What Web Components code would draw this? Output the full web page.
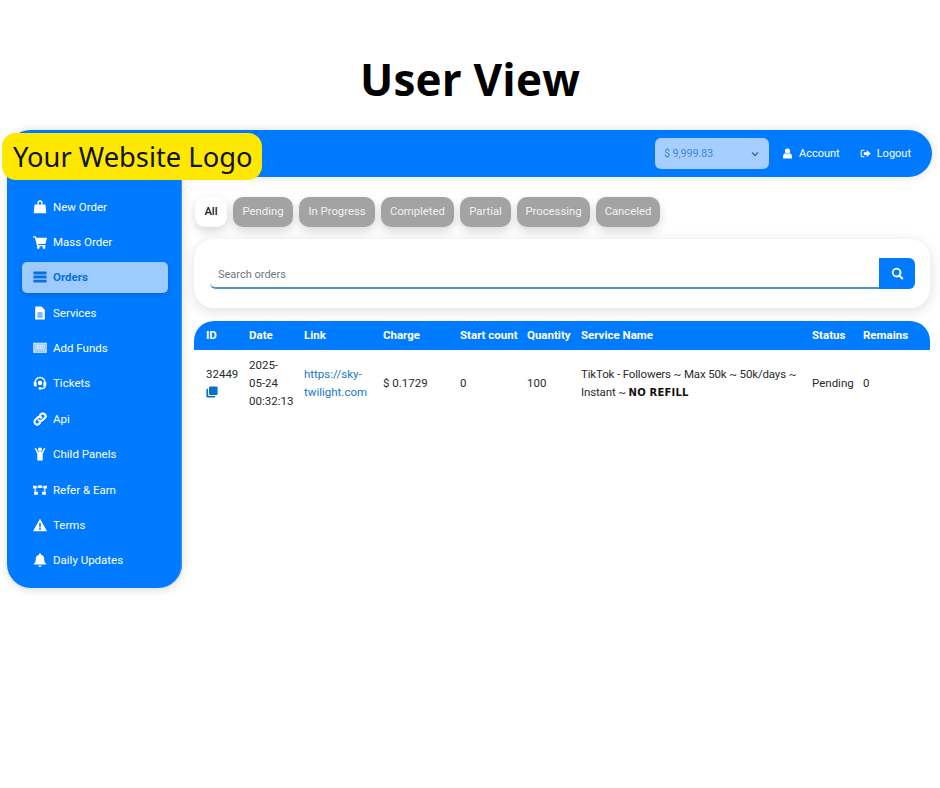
<!DOCTYPE html>
<html>
<head>
<meta charset="utf-8">
<title>User View</title>
<style>
  html, body { margin: 0; background: #fff; }
  body { font-family: Roboto, sans-serif; }
</style>
</head>
<body>
<user-view>
  <top-bar slot="top" balance="$ 9,999.83"></top-bar>
  <side-nav slot="side"></side-nav>
  <orders-page slot="main"></orders-page>
</user-view>

<script>
// Icons, drawn on a 16 x 16 box, filled with currentColor
const ICONS = {
  bag: '<path d="M5 5.500V3.400a3 3 0 0 1 6 0v2.100H9.500V3.400a1.500 1.500 0 0 0-3 0v2.100z"/><path d="M1.800 5h12.400l1 10H.8z"/>',
  cart: '<path d="M0 1.500h3.300l.5 1.700H16l-1.900 7H5.700l.3 1.200h8.200v1.400H4.700L2.200 2.900H0z"/><circle cx="6" cy="14.300" r="1.600"/><circle cx="12.500" cy="14.300" r="1.600"/>',
  list: '<path d="M.5 1.800h15v3.300H.5zM.5 6.400h15v3.300H.5zM.5 11h15v3.300H.5z"/>',
  file: '<path fill-rule="evenodd" d="M2.500 .5h7.200l3.800 3.800v11.200h-11zM5 7.500v1h6v-1zM5 9.800v1h6v-1zM5 12v1h6v-1z"/>',
  funds: '<path d="M.3 2h15.400v11.500H.3z" opacity=".88"/><path fill="none" stroke="#5aa5f7" stroke-width=".8" d="M2 3.600h12v6.400H2zM4.200 5.400v3M7 5.400v3M9.800 5.400v3M12 5.400v3M2 11.700h12"/>',
  headset: '<path fill="none" stroke="currentColor" stroke-width="1.700" d="M2.300 9V7.400a5.700 5.700 0 0 1 11.400 0V9"/><path d="M.8 7h3.400v5H2.600A1.800 1.800 0 0 1 .8 10.200zM11.800 7h3.400v3.200a1.800 1.800 0 0 1-1.800 1.800h-1.600z"/><path fill="none" stroke="currentColor" stroke-width="1.500" d="M13.800 11.500c0 1.900-1.200 2.800-3 2.800H8"/><path d="M6.500 12.900h3v2.600h-3z"/><circle cx="8" cy="8" r="2.500"/>',
  link: '<path fill="none" stroke="currentColor" stroke-width="2.400" stroke-linecap="round" d="M6.500 9.500a3.100 3.100 0 0 0 4.400 0l2.500-2.500A3.100 3.100 0 0 0 9 2.600L8 3.600M9.500 6.500a3.100 3.100 0 0 0-4.400 0L2.600 9A3.100 3.100 0 0 0 7 13.400l1-1"/>',
  child: '<circle cx="8" cy="3" r="2.300"/><path d="M3.200 .8 5.900 5.700h4.200L12.800.8l1.300.8-3 6V15.500H4.900V7.600l-3-6z"/>',
  network: '<path d="M0 3h4v3.300H0zM6 2.500h4v3.300H6zM12 3h4v3.300h-4zM1.300 10h4.400v3.500H1.300zM10.300 10h4.400v3.500h-4.400z"/><path d="M4 3.900h2v1.200H4zM10 3.900h2v1.200h-2zM2 6h1.300v4H2zM12.700 6H14v4h-1.300z"/>',
  warning: '<path fill-rule="evenodd" d="M8 .8 16 15H0zM7 5.800l.2 5h1.600l.2-5zM8 11.500a1.100 1.100 0 1 0 0 2.200 1.100 1.100 0 0 0 0-2.200z"/>',
  bell: '<path d="M8 .3a1.100 1.100 0 0 1 1.100 1.100v.6c2.400.5 3.800 2.500 3.800 5 0 3.100.9 4 2.100 5.200v.8H1v-.8c1.200-1.200 2.100-2.100 2.100-5.200 0-2.500 1.400-4.500 3.800-5v-.6A1.100 1.100 0 0 1 8 .3zM6 14.300h4A2 2 0 0 1 8 16a2 2 0 0 1-2-1.700z"/>',
  user: '<circle cx="8" cy="4.400" r="3.800"/><path d="M1.500 15.300V12c0-2.400 1.500-4.200 3.400-4.400a4.700 4.700 0 0 0 6.200 0c1.900.2 3.400 2 3.400 4.400v3.300z"/>',
  logout: '<path d="M6.500 2.500H3.400A2.400 2.400 0 0 0 1 4.900v6.200a2.400 2.400 0 0 0 2.400 2.400h3.100v-1.500H3.400a.9.900 0 0 1-.9-.9V4.900c0-.5.4-.9.900-.9h3.100z"/><path d="M9.800 3 15.500 8l-5.700 5v-3H5.500V6h4.300z"/>',
  search: '<path fill-rule="evenodd" d="M6.800 .8a6 6 0 0 1 4.900 9.500l3.700 3.700-1.700 1.700-3.700-3.700A6 6 0 1 1 6.800.8zm0 2.400a3.600 3.600 0 1 0 0 7.200 3.600 3.600 0 0 0 0-7.200z"/>',
  copy: '<path d="M5.500 .8h8.500A1.500 1.500 0 0 1 15.500 2.300v8.200a1.500 1.500 0 0 1-1.500 1.500H5.500A1.500 1.500 0 0 1 4 10.500V2.300A1.500 1.500 0 0 1 5.500 .8z"/><path d="M2.800 3.800v7.700a1.800 1.800 0 0 0 1.800 1.800h7.900v.6a1.500 1.500 0 0 1-1.500 1.500H2A1.500 1.500 0 0 1 .5 13.900V5.300A1.500 1.500 0 0 1 2 3.800z"/>'
};

const icon = (name, size = 14) =>
  `<svg width="${size}" height="${size}" viewBox="0 0 16 16" fill="currentColor" aria-hidden="true">${ICONS[name]}</svg>`;

const UI_FONT = 'Roboto, "Noto Sans", sans-serif';

class UserView extends HTMLElement {
  constructor() {
    super();
    this.attachShadow({ mode: 'open' });
    this.shadowRoot.innerHTML = `
      <style>
        :host { display: block; height: 788px; overflow: hidden; background: #fff; color: #000; font-family: ${UI_FONT}; }
        h1 {
          margin: 0;
          height: 130px;
          box-sizing: border-box;
          padding-top: 50px;
          text-align: center;
          font: 700 44px/58px "Open Sans", sans-serif;
          letter-spacing: .2px;
        }
        .app {
          position: relative;
          margin: 0 8px 0 7px;
          display: grid;
          grid-template-columns: 175px 1fr;
          grid-template-rows: 47px auto;
        }
        .top { grid-column: 1 / 3; }
        .main { padding: 20px 2px 0 12px; }
        .logo {
          position: absolute;
          left: -5px;
          top: 3px;
          width: 260px;
          height: 47px;
          padding-left: 11px;
          box-sizing: border-box;
          background: #ffe800;
          border-radius: 14px;
          font: 400 27.300px/47px "Noto Sans", sans-serif;
          white-space: nowrap;
          color: #111;
          z-index: 2;
        }
      </style>
      <h1>User View</h1>
      <div class="app">
        <div class="top"><slot name="top"></slot></div>
        <div class="side"><slot name="side"></slot></div>
        <div class="main"><slot name="main"></slot></div>
        <div class="logo">Your Website Logo</div>
      </div>
    `;
  }
}

class TopBar extends HTMLElement {
  constructor() {
    super();
    this.attachShadow({ mode: 'open' });
  }

  connectedCallback() {
    this.shadowRoot.innerHTML = `
      <style>
        :host {
          display: flex;
          align-items: center;
          justify-content: flex-end;
          height: 47px;
          padding-right: 21px;
          background: #007bff;
          border-radius: 24px;
          box-shadow: 0 0 10px rgba(0,0,0,.14);
          color: #fff;
          font-size: 11px;
          font-family: ${UI_FONT};
        }
        .balance {
          display: flex;
          align-items: center;
          justify-content: space-between;
          width: 114px;
          height: 31px;
          margin-right: 13px;
          padding: 0 9px 0 9px;
          box-sizing: border-box;
          border-radius: 6px;
          background: #a6cfff;
          color: #3d88d8;
          letter-spacing: -.2px;
        }
        .link { display: flex; align-items: center; gap: 6px; }
        .link + .link { margin-left: 20px; }
        span { padding-bottom: 1px; }
        svg { display: block; }
      </style>
      <div class="balance">
        <span>${this.getAttribute('balance')}</span>
        <svg width="10" height="10" viewBox="0 0 10 10" fill="none" stroke="#2f6fb5" stroke-width="1.500"><path d="M2 3.500 5 6.500 8 3.500"/></svg>
      </div>
      <div class="link">${icon('user', 11)}<span>Account</span></div>
      <div class="link">${icon('logout', 11)}<span>Logout</span></div>
    `;
  }
}

class SideNav extends HTMLElement {
  constructor() {
    super();
    this.attachShadow({ mode: 'open' });
    this.items = [
      ['bag', 'New Order'], ['cart', 'Mass Order'], ['list', 'Orders', true],
      ['file', 'Services'], ['funds', 'Add Funds'], ['headset', 'Tickets'],
      ['link', 'Api'], ['child', 'Child Panels'], ['network', 'Refer & Earn'],
      ['warning', 'Terms'], ['bell', 'Daily Updates']
    ];
  }

  connectedCallback() {
    const rows = this.items.map(([name, label, active]) => `
      <div class="item${active ? ' active' : ''}">${icon(name)}<span>${label.replace('&', '&amp;')}</span></div>
    `).join('');
    this.shadowRoot.innerHTML = `
      <style>
        :host {
          display: block;
          height: 411px;
          box-sizing: border-box;
          padding: 14px 14px 0 15px;
          background: #007bff;
          border-radius: 0 0 24px 24px;
          box-shadow: 0 2px 10px rgba(0,0,0,.14), inset -1px 0 0 #3d94f0;
          color: #fff;
          font-size: 11.500px;
          font-family: ${UI_FONT};
        }
        .item {
          display: flex;
          align-items: center;
          gap: 6px;
          height: 31px;
          margin-bottom: 4.400px;
          padding-left: 11px;
          border-radius: 5px;
        }
        .item.active { background: #9dcbff; color: #0a6fe0; font-weight: 700; box-shadow: 0 2px 6px rgba(0,0,0,.15); }
        svg { flex: none; }
      </style>
      ${rows}
    `;
  }
}

class FilterPills extends HTMLElement {
  constructor() {
    super();
    this.attachShadow({ mode: 'open' });
  }

  connectedCallback() {
    const pills = [['All', 32], ['Pending', 60], ['In Progress', 76], ['Completed', 73], ['Partial', 51], ['Processing', 73], ['Canceled', 64]];
    this.shadowRoot.innerHTML = `
      <style>
        :host { display: flex; gap: 6px; padding-left: 1px; font-size: 11.300px; font-family: ${UI_FONT}; }
        span {
          height: 30px;
          line-height: 30px;
          text-align: center;
          border-radius: 10px;
          background: #a3a3a3;
          color: #f1f1f1;
          box-shadow: 0 4px 10px rgba(0,0,0,.16);
          white-space: nowrap;
        }
        span.on { background: #fff; color: #222; font-weight: 500; }
      </style>
      ${pills.map(([l, w], i) => `<span class="${i === 0 ? 'on' : ''}" style="width:${w}px">${l}</span>`).join('')}
    `;
  }
}

class SearchCard extends HTMLElement {
  constructor() {
    super();
    this.attachShadow({ mode: 'open' });
    this.shadowRoot.innerHTML = `
      <style>
        :host {
          display: flex;
          height: 69px;
          box-sizing: border-box;
          margin-top: 12px;
          padding: 19px 15px 19px 16px;
          background: #fff;
          border-radius: 20px;
          box-shadow: 0 3px 14px rgba(0,0,0,.13);
          font-size: 11px;
          font-family: ${UI_FONT};
        }
        .input {
          flex: 1;
          display: flex;
          align-items: center;
          padding: 3px 0 0 8px;
          color: #6f7780;
          border-bottom: 2px solid #4f94c4;
          border-bottom-left-radius: 6px;
        }
        button {
          all: unset;
          display: flex;
          align-items: center;
          justify-content: center;
          width: 36px;
          background: #007bff;
          color: #fff;
          border-radius: 0 6px 6px 0;
        }
      </style>
      <div class="input">Search orders</div>
      <button>${icon('search', 13)}</button>
    `;
  }
}

class OrdersTable extends HTMLElement {
  constructor() {
    super();
    this.attachShadow({ mode: 'open' });
    this.shadowRoot.innerHTML = `
      <style>
        :host { display: block; margin-top: 13px; font-size: 11.500px; line-height: 18px; font-family: ${UI_FONT}; color: #2a2a2a; }
        table { width: 100%; table-layout: fixed; border-collapse: separate; border-spacing: 0; }
        th {
          height: 29px;
          padding: 0 0 2px 12px;
          box-sizing: border-box;
          background: #007bff;
          color: #fff;
          font-weight: 700;
          text-align: left;
          white-space: nowrap;
        }
        th:first-child { border-top-left-radius: 20px; }
        th:last-child { border-top-right-radius: 20px; }
        td { padding: 6px 0 6px 12px; vertical-align: middle; font-weight: 400; }
        td.service { letter-spacing: -.15px; white-space: nowrap; }
        a { color: #1878c8; text-decoration: none; }
        .copy { display: flex; align-items: center; height: 18px; color: #0a6fd0; }
        b { font-family: "DejaVu Sans", sans-serif; font-size: 10px; letter-spacing: .2px; color: #111; }
      </style>
      <table>
        <colgroup>
          <col style="width:43px"><col style="width:55px"><col style="width:79px"><col style="width:77px">
          <col style="width:67px"><col style="width:54px"><col style="width:231px"><col style="width:51px"><col>
        </colgroup>
        <thead>
          <tr><th>ID</th><th>Date</th><th>Link</th><th>Charge</th><th>Start count</th><th>Quantity</th><th>Service Name</th><th>Status</th><th>Remains</th></tr>
        </thead>
        <tbody>
          <tr>
            <td>32449<span class="copy">${icon('copy', 12)}</span></td>
            <td>2025-<br>05-24<br>00:32:13</td>
            <td><a>https://sky-<br>twilight.com</a></td>
            <td>$ 0.1729</td>
            <td>0</td>
            <td>100</td>
            <td class="service">TikTok - Followers ~ Max 50k ~ 50k/days ~<br>Instant ~ <b>NO REFILL</b></td>
            <td>Pending</td>
            <td>0</td>
          </tr>
        </tbody>
      </table>
    `;
  }
}

class OrdersPage extends HTMLElement {
  constructor() {
    super();
    this.attachShadow({ mode: 'open' });
    this.shadowRoot.innerHTML = `
      <style>:host { display: block; }</style>
      <filter-pills></filter-pills>
      <search-card></search-card>
      <orders-table></orders-table>
    `;
  }
}

customElements.define('top-bar', TopBar);
customElements.define('side-nav', SideNav);
customElements.define('filter-pills', FilterPills);
customElements.define('search-card', SearchCard);
customElements.define('orders-table', OrdersTable);
customElements.define('orders-page', OrdersPage);
customElements.define('user-view', UserView);
</script>
</body>
</html>
